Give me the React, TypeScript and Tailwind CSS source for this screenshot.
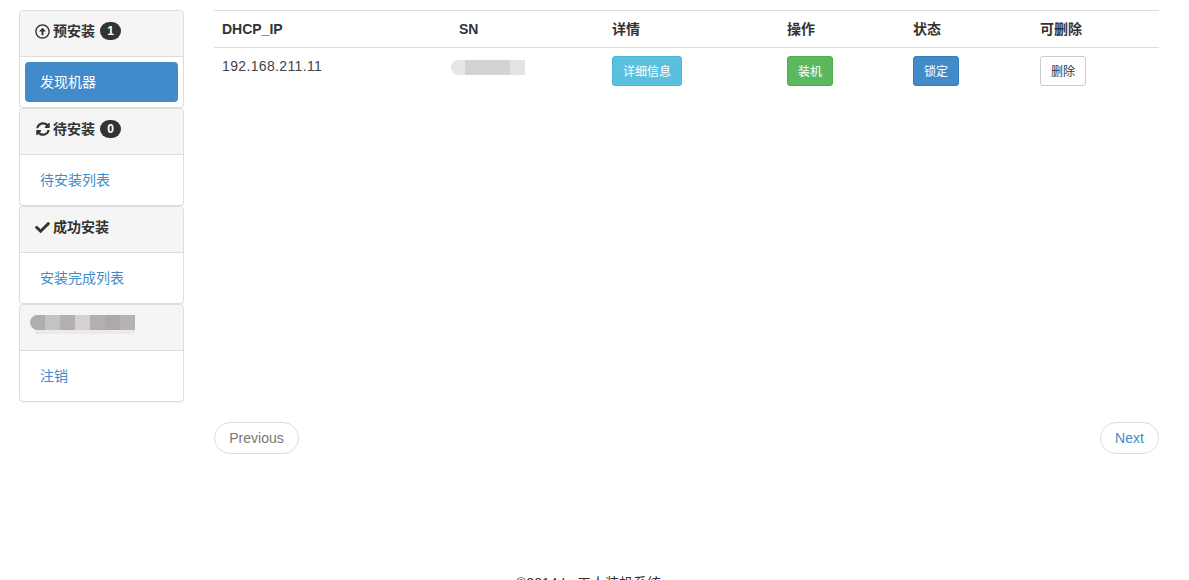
import type { ReactNode } from "react";
import { FaCheck, FaRegArrowAltCircleUp, FaSyncAlt } from "react-icons/fa";

const font = "font-['Liberation_Sans','Noto_Sans_CJK_SC',sans-serif]";

const Panel = ({ title, children }: { title: ReactNode; children: ReactNode }) => (
  <div className="h-[98px] rounded border border-[#ddd] bg-white shadow-[0_1px_1px_rgba(0,0,0,0.05)]">
    <div className="flex h-[46px] items-center gap-[3px] rounded-t border-b border-[#ddd] bg-[#f5f5f5] px-[15px] pb-[5px] text-sm font-bold text-[#333]">
      {title}
    </div>
    <div className="p-[5px]">{children}</div>
  </div>
);

const NavLink = ({ label, active }: { label: string; active?: boolean }) => (
  <a
    href="#"
    className={
      active
        ? "flex h-10 items-center rounded bg-[#428bca] px-[15px] text-sm text-white"
        : "flex h-10 items-center rounded px-[15px] text-sm text-[#428bca]"
    }
  >
    {label}
  </a>
);

const Badge = ({ count }: { count: number }) => (
  <span className="ml-[2px] flex h-[18px] w-[21px] items-center justify-center rounded-full bg-[#333] text-xs font-bold text-white">
    {count}
  </span>
);

const Redacted = ({ cells, className }: { cells: [string, string][]; className: string }) => (
  <div className={`flex overflow-hidden rounded-l-full ${className}`}>
    {cells.map(([w, c], i) => (
      <div key={i} className={`h-full ${w} ${c}`} />
    ))}
  </div>
);

const Btn = ({ label, className }: { label: string; className: string }) => (
  <button className={`h-[30px] rounded-[3px] border pt-px text-xs ${className}`}>{label}</button>
);

const Th = ({ children }: { children: ReactNode }) => (
  <th className="h-[37px] border-b border-[#ddd] px-2 text-left text-sm font-bold text-[#333]">{children}</th>
);

export default function App() {
  return (
    <div className={`flex h-[580px] flex-col overflow-hidden bg-white text-sm text-[#333] ${font}`}>
      <div className="flex items-start gap-[30px] pt-[10px] pl-[19px] pr-[30px]">
        <aside className="w-[165px] shrink-0">
          <Panel
            title={
              <>
                <FaRegArrowAltCircleUp className="size-[15px] shrink-0" />
                预安装
                <Badge count={1} />
              </>
            }
          >
            <NavLink label="发现机器" active />
          </Panel>
          <Panel
            title={
              <>
                <FaSyncAlt className="mx-[0.5px] size-[14px] shrink-0" />
                待安装
                <Badge count={0} />
              </>
            }
          >
            <NavLink label="待安装列表" />
          </Panel>
          <Panel
            title={
              <>
                <FaCheck className="size-[15px] shrink-0" />
                成功安装
              </>
            }
          >
            <NavLink label="安装完成列表" />
          </Panel>
          <div className="h-[98px] rounded border border-[#ddd] bg-white shadow-[0_1px_1px_rgba(0,0,0,0.05)]">
            <div className="h-[46px] rounded-t border-b border-[#ddd] bg-[#f5f5f5] pt-[10px] pl-[10px]">
              <Redacted
                className="h-[15px] w-[105px]"
                cells={[
                  ["w-[15px]", "bg-[#b0aeaa]"],
                  ["w-[15px]", "bg-[#c4c2c2]"],
                  ["w-[15px]", "bg-[#b4afb4]"],
                  ["w-[15px]", "bg-[#d3d1d1]"],
                  ["w-[15px]", "bg-[#b5aeb3]"],
                  ["w-[15px]", "bg-[#aea7ad]"],
                  ["w-[15px]", "bg-[#b6b1b5]"],
                ]}
              />
              <div className="ml-[5px] h-1 w-[100px] bg-[#ebe9ea]" />
            </div>
            <div className="p-[5px]">
              <NavLink label="注销" />
            </div>
          </div>
        </aside>

        <main className="min-w-0 flex-1">
          <table className="w-full table-fixed border-t border-[#ddd]">
            <colgroup>
              <col className="w-[237px]" />
              <col className="w-[153px]" />
              <col className="w-[175px]" />
              <col className="w-[126px]" />
              <col className="w-[127px]" />
              <col />
            </colgroup>
            <thead>
              <tr>
                <Th>DHCP_IP</Th>
                <Th>SN</Th>
                <Th>详情</Th>
                <Th>操作</Th>
                <Th>状态</Th>
                <Th>可删除</Th>
              </tr>
            </thead>
            <tbody>
              <tr>
                <td className="p-2 align-top leading-5 tracking-[0.35px] text-[#444]">192.168.211.11</td>
                <td className="pt-3 pb-2 align-top">
                  <Redacted
                    className="h-[15px] w-[74px]"
                    cells={[
                      ["w-[14px]", "bg-[#e8e6e7]"],
                      ["w-[45px]", "bg-[#d3d3d3]"],
                      ["w-[15px]", "bg-[#e3e3e3]"],
                    ]}
                  />
                </td>
                <td className="p-2 align-top">
                  <Btn label="详细信息" className="w-[70px] border-[#46b8da] bg-[#5bc0de] text-white" />
                </td>
                <td className="p-2 align-top">
                  <Btn label="装机" className="w-[46px] border-[#4cae4c] bg-[#5cb85c] text-white" />
                </td>
                <td className="p-2 align-top">
                  <Btn label="锁定" className="w-[46px] border-[#357ebd] bg-[#428bca] text-white" />
                </td>
                <td className="p-2 align-top">
                  <Btn label="删除" className="w-[46px] border-[#ccc] bg-white text-[#333]" />
                </td>
              </tr>
            </tbody>
          </table>

          <nav className="mt-[328px] flex justify-between">
            <a href="#" className="flex h-8 w-[85px] items-center justify-center rounded-full border border-[#ddd] text-[#777]">
              Previous
            </a>
            <a href="#" className="flex h-8 w-[59px] items-center justify-center rounded-full border border-[#ddd] text-[#428bca]">
              Next
            </a>
          </nav>
        </main>
      </div>

      <footer className="mt-[119px] pr-3 text-center leading-5">©2014 Le工人装机系统</footer>
    </div>
  );
}
